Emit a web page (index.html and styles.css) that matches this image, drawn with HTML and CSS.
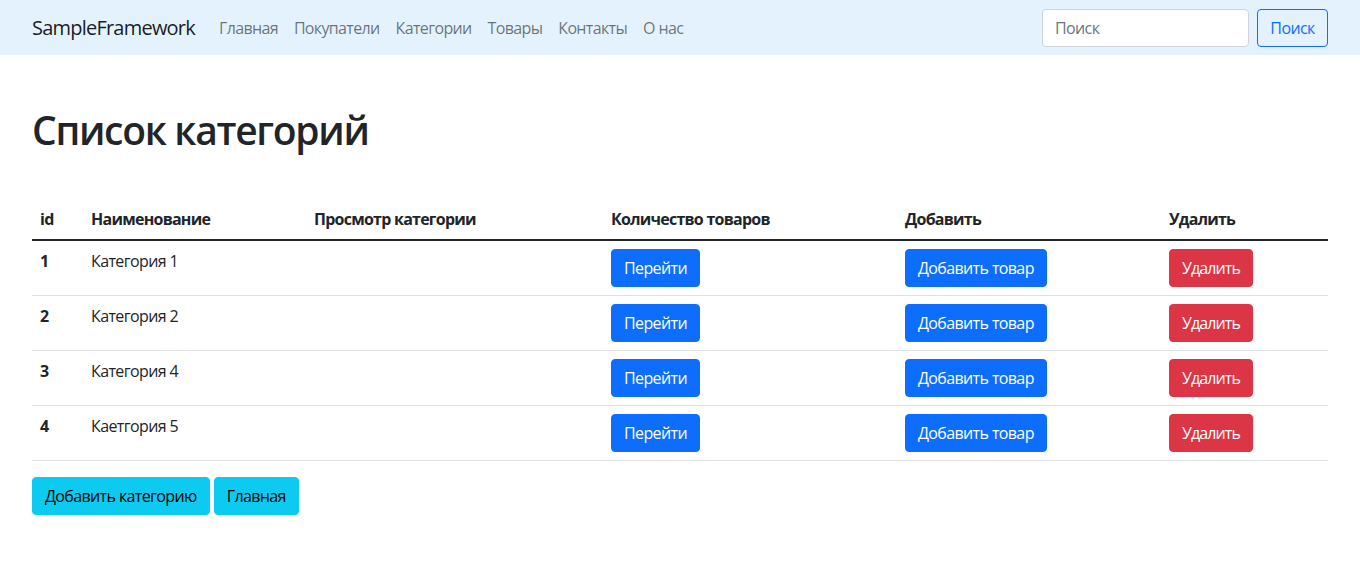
FILE: index.html
```html
<!DOCTYPE html>
<html lang="ru">
<head>
<meta charset="utf-8">
<title>Список категорий</title>
<link rel="stylesheet" href="styles.css">
</head>
<body>
<nav class="navbar">
  <div class="nav-left">
    <a class="brand" href="#">SampleFramework</a>
    <ul class="nav-links">
      <li><a href="#">Главная</a></li>
      <li><a href="#">Покупатели</a></li>
      <li><a href="#">Категории</a></li>
      <li><a href="#">Товары</a></li>
      <li><a href="#">Контакты</a></li>
      <li><a href="#">О нас</a></li>
    </ul>
  </div>
  <form class="search">
    <input class="search-input" type="search" placeholder="Поиск">
    <button class="btn btn-outline" type="button">Поиск</button>
  </form>
</nav>
<main class="content">
  <h1 class="title">Список категорий</h1>
  <table class="table">
    <thead>
      <tr>
        <th class="c-id">id</th>
        <th class="c-name">Наименование</th>
        <th class="c-view">Просмотр категории</th>
        <th class="c-count">Количество товаров</th>
        <th class="c-add">Добавить</th>
        <th class="c-del">Удалить</th>
      </tr>
    </thead>
    <tbody>
      <tr>
        <th>1</th><td>Категория 1</td><td></td>
        <td><a class="btn btn-primary" href="#">Перейти</a></td>
        <td><a class="btn btn-primary" href="#">Добавить товар</a></td>
        <td><a class="btn btn-danger" href="#">Удалить</a></td>
      </tr>
      <tr>
        <th>2</th><td>Категория 2</td><td></td>
        <td><a class="btn btn-primary" href="#">Перейти</a></td>
        <td><a class="btn btn-primary" href="#">Добавить товар</a></td>
        <td><a class="btn btn-danger" href="#">Удалить</a></td>
      </tr>
      <tr>
        <th>3</th><td>Категория 4</td><td></td>
        <td><a class="btn btn-primary" href="#">Перейти</a></td>
        <td><a class="btn btn-primary" href="#">Добавить товар</a></td>
        <td><a class="btn btn-danger" href="#">Удалить</a></td>
      </tr>
      <tr>
        <th>4</th><td>Каетгория 5</td><td></td>
        <td><a class="btn btn-primary" href="#">Перейти</a></td>
        <td><a class="btn btn-primary" href="#">Добавить товар</a></td>
        <td><a class="btn btn-danger" href="#">Удалить</a></td>
      </tr>
    </tbody>
  </table>
  <div class="actions">
    <a class="btn btn-info" href="#">Добавить категорию</a>
    <a class="btn btn-info" href="#">Главная</a>
  </div>
</main>
</body>
</html>
```
FILE: styles.css
```css
* { box-sizing: border-box; }
html, body { margin: 0; padding: 0; }
body {
  font-family: "Open Sans", "Noto Sans", "Liberation Sans", sans-serif;
  font-size: 16px;
  line-height: 24px;
  color: #212529;
  background: #fff;
  letter-spacing: -0.62px;
}
a { text-decoration: none; }

.navbar {
  height: 55px;
  background: #e3f2fd;
  display: flex;
  align-items: center;
  justify-content: space-between;
  padding: 0 32px;
}
.nav-left { display: flex; align-items: center; }
.brand {
  font-size: 20px;
  line-height: 30px;
  color: rgba(0,0,0,.9);
  margin-right: 16px;
  letter-spacing: -0.78px;
}
.nav-links { list-style: none; margin: 0; padding: 0; display: flex; }
.nav-links a {
  display: block;
  padding: 8px;
  color: rgba(0,0,0,.55);
  letter-spacing: -0.65px;
}
.search { display: flex; align-items: center; gap: 8px; }
.search-input {
  width: 207px;
  height: 38px;
  border: 1px solid #ced4da;
  border-radius: 4px;
  padding: 6px 12px;
  font: inherit;
  letter-spacing: inherit;
  color: #212529;
  background: #fff;
}
.search-input::placeholder { color: #6c757d; }

.btn {
  display: inline-block;
  height: 38px;
  padding: 6px 12px;
  border: 1px solid transparent;
  border-radius: 4px;
  font: inherit;
  letter-spacing: inherit;
  line-height: 24px;
  vertical-align: middle;
  cursor: pointer;
}
.btn-outline { color: #0d6efd; border-color: #0d6efd; background: transparent; min-width: 71px; }
.btn-primary { color: #fff; background: #0d6efd; border-color: #0d6efd; }
.btn-danger { color: #fff; background: #dc3545; border-color: #dc3545; letter-spacing: -0.9px; }
.btn-info { color: #000; background: #0dcaf0; border-color: #0dcaf0; }

.content { padding: 0 32px; }
.title {
  font-size: 39px;
  line-height: 48px;
  font-weight: 600;
  margin: 51px 0 45px;
  letter-spacing: -1.3px;
}

.table {
  width: 100%;
  border-collapse: collapse;
  table-layout: fixed;
  margin-bottom: 16px;
}
.table th, .table td {
  padding: 8px;
  text-align: left;
  vertical-align: top;
  border-bottom: 1px solid #dee2e6;
}
.table thead th {
  font-weight: 700;
  border-bottom: 2px solid #212529;
  letter-spacing: -0.75px;
}
.table tbody th { font-weight: 700; }
.c-id { width: 51px; }
.c-name { width: 223px; }
.c-view { width: 297px; }
.c-count { width: 294px; }
.c-add { width: 264px; }
.c-del { width: 167px; }

.actions { display: flex; gap: 4px; }
```
